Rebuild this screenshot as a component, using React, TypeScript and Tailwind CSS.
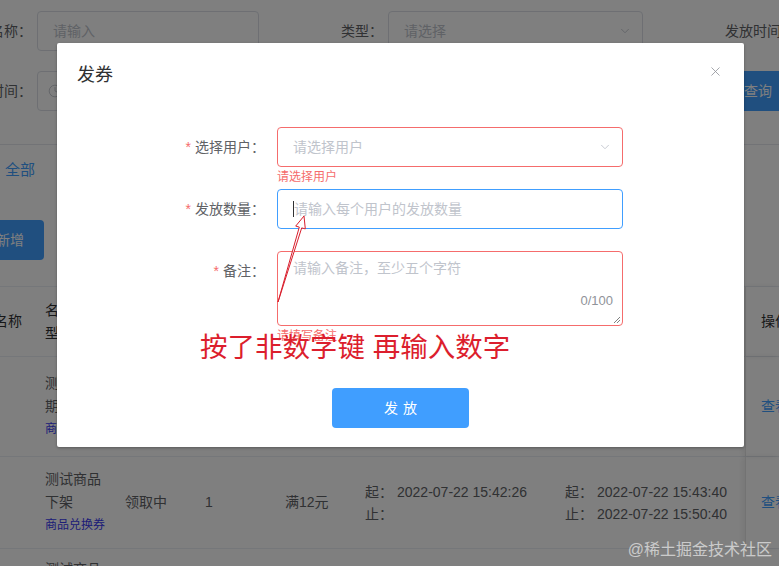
import { ChevronDown, Clock, X } from "lucide-react";

type Cell = { w: string; content: React.ReactNode };

function TableRow({ cells, height }: { cells: Cell[]; height: string }) {
  return (
    <div className={`flex shrink-0 border-b border-[#ebeef5] ${height}`}>
      {cells.map((cell, i) => (
        <div key={i} className={`flex items-center shrink-0 ${cell.w}`}>
          {cell.content}
        </div>
      ))}
    </div>
  );
}

function TypeTag({ children }: { children: React.ReactNode }) {
  return <div className="text-[12px] leading-[23px] text-[#3a3af0]">{children}</div>;
}

function BackgroundPage() {
  const opCol = "w-[34px] pl-[15px] border-l border-[#e6e6e6] shadow-[-2px_0_6px_rgba(0,0,0,0.08)] whitespace-nowrap";

  return (
    <div className="text-[14px] text-[#606266]">
      {/* search row 1 */}
      <div className="flex items-center h-10 mt-[11px] -ml-[58px] whitespace-nowrap">
        <span className="w-[90px] shrink-0 text-right">商品名称：</span>
        <div className="ml-[5px] w-[222px] h-10 shrink-0 flex items-center px-[15px] border border-[#dcdfe6] rounded-[4px] text-[#c0c4cc]">
          请输入
        </div>
        <span className="w-[129px] shrink-0 pr-[5px] text-right">类型：</span>
        <div className="w-[255px] h-10 shrink-0 flex items-center justify-between pl-[15px] pr-[10px] border border-[#dcdfe6] rounded-[4px] text-[#c0c4cc]">
          请选择
          <ChevronDown size={14} strokeWidth={1.5} color="#c0c4cc" />
        </div>
        <span className="ml-[82px] shrink-0">发放时间：</span>
      </div>

      {/* search row 2 */}
      <div className="flex items-center h-10 mt-[20px] -ml-[58px] whitespace-nowrap">
        <span className="w-[90px] shrink-0 text-right">发放时间：</span>
        <div className="ml-[5px] w-[400px] h-10 shrink-0 flex items-center gap-2 pl-[10px] border border-[#dcdfe6] rounded-[4px] text-[#c0c4cc]">
          <Clock size={14} strokeWidth={1.5} color="#c0c4cc" />
          开始日期
        </div>
        <button className="ml-[286px] w-[70px] h-10 shrink-0 rounded-[4px] bg-[#409eff] text-white">
          查询
        </button>
      </div>

      {/* tabs */}
      <div className="mt-[33px] border-t border-[#e4e7ed] h-[52px] flex items-center pl-[5px] text-[15px] text-[#409eff]">
        全部
      </div>

      <button className="mt-[24px] -ml-[24px] w-[68px] h-10 rounded-[4px] bg-[#409eff] text-white">
        新增
      </button>

      {/* table */}
      <div className="mt-[26px] border-t border-[#ebeef5] flex flex-col">
        <TableRow
          height="h-[70px]"
          cells={[
            { w: "w-[45px]", content: <span className="-ml-[6px] text-[#303133]">名称</span> },
            { w: "w-[80px]", content: <span className="w-[62px] leading-[23px] text-[#303133]">名称及类型</span> },
            { w: "w-[80px]", content: <span className="text-[#303133]">状态</span> },
            { w: "w-[80px]", content: <span className="text-[#303133]">数量</span> },
            { w: "w-[80px]", content: <span className="text-[#303133]">门槛</span> },
            { w: "w-[200px]", content: <span className="text-[#303133]">发放时间</span> },
            { w: "w-[180px]", content: <span className="text-[#303133]">有效期</span> },
            { w: opCol, content: <span className="text-[#303133]">操作</span> },
          ]}
        />
        <TableRow
          height="h-[100px]"
          cells={[
            { w: "w-[45px]", content: null },
            {
              w: "w-[80px]",
              content: (
                <div className="w-[62px] leading-[23px]">
                  测试商品期限
                  <TypeTag>商品兑换券</TypeTag>
                </div>
              ),
            },
            { w: "w-[80px]", content: "已结束" },
            { w: "w-[80px]", content: "1" },
            { w: "w-[80px]", content: "满10元" },
            { w: "w-[200px]", content: null },
            { w: "w-[180px]", content: null },
            { w: opCol, content: <span className="text-[#409eff]">查看</span> },
          ]}
        />
        <TableRow
          height="h-[92px]"
          cells={[
            { w: "w-[45px]", content: null },
            {
              w: "w-[80px]",
              content: (
                <div className="w-[62px] leading-[23px]">
                  测试商品下架
                  <TypeTag>商品兑换券</TypeTag>
                </div>
              ),
            },
            { w: "w-[80px]", content: "领取中" },
            { w: "w-[80px]", content: "1" },
            { w: "w-[80px]", content: "满12元" },
            {
              w: "w-[200px]",
              content: (
                <div className="leading-[22px] whitespace-nowrap">
                  <div>
                    起：<span className="ml-[4px]">2022-07-22 15:42:26</span>
                  </div>
                  <div>止：</div>
                </div>
              ),
            },
            {
              w: "w-[180px]",
              content: (
                <div className="leading-[22px] whitespace-nowrap">
                  <div>
                    起：<span className="ml-[4px]">2022-07-22 15:43:40</span>
                  </div>
                  <div>
                    止：<span className="ml-[4px]">2022-07-22 15:50:40</span>
                  </div>
                </div>
              ),
            },
            { w: opCol, content: <span className="text-[#409eff]">查看</span> },
          ]}
        />
        <div className="flex pt-[9px]">
          <div className="w-[45px] shrink-0" />
          <div className="w-[62px] leading-[23px]">测试商品</div>
        </div>
      </div>
    </div>
  );
}

function FormLabel({ children }: { children: React.ReactNode }) {
  return (
    <div className="w-[120px] shrink-0 pr-[12px] text-right leading-10 text-[#606266] whitespace-nowrap">
      <span className="mr-[4px] text-[#f56c6c]">*</span>
      {children}
    </div>
  );
}

function CouponDialog() {
  return (
    <div className="absolute left-[57px] top-[43px] w-[687px] h-[404px] bg-white rounded-[2px] shadow-[0_1px_3px_rgba(0,0,0,0.3)]">
      <div className="relative px-5 pt-5 pb-[10px]">
        <div className="text-[18px] leading-6 text-[#303133]">发券</div>
        <button className="absolute top-[20px] right-[21px] w-4 h-4 flex items-center justify-center">
          <X size={15} strokeWidth={1.3} color="#909399" />
        </button>
      </div>

      <div className="px-5 pt-[30px] text-[14px]">
        <div className="flex flex-col pl-[80px]">
          <div className="relative flex mb-[22px]">
            <FormLabel>选择用户：</FormLabel>
            <div className="w-[346px] h-10 flex items-center justify-between pl-[15px] pr-[10px] border border-[#f56c6c] rounded-[4px] text-[#c0c4cc]">
              请选择用户
              <ChevronDown size={14} strokeWidth={1.5} color="#c0c4cc" />
            </div>
            <div className="absolute left-[120px] top-full pt-[4px] text-[12px] leading-[12px] text-[#f56c6c]">
              请选择用户
            </div>
          </div>

          <div className="relative flex mb-[22px]">
            <FormLabel>发放数量：</FormLabel>
            <div className="w-[346px] h-10 flex items-center pl-[15px] border border-[#409eff] rounded-[4px] text-[#c0c4cc]">
              <span className="w-px h-4 bg-[#303133]" />
              请输入每个用户的发放数量
            </div>
          </div>

          <div className="relative flex mb-[22px]">
            <FormLabel>备注：</FormLabel>
            <div className="relative w-[346px] h-[75px] px-[15px] pt-[6px] border border-[#f56c6c] rounded-[4px] text-[#c0c4cc] leading-[21px]">
              请输入备注，至少五个字符
              <span className="absolute right-[9px] bottom-[16px] text-[13px] leading-4 text-[#909399]">
                0/100
              </span>
              <svg className="absolute right-[1px] bottom-[1px]" width="8" height="8" viewBox="0 0 8 8">
                <path d="M7 1 L1 7 M7 4 L4 7" stroke="#808080" strokeWidth="1" />
              </svg>
            </div>
            <div className="absolute left-[120px] top-full pt-[4px] text-[12px] leading-[12px] text-[#f56c6c]">
              请填写备注
            </div>
          </div>
        </div>

        <div className="flex justify-center mt-[40px]">
          <button className="w-[137px] h-10 rounded-[4px] bg-[#409eff] text-white tracking-[5px] pl-[5px]">
            发放
          </button>
        </div>
      </div>

      {/* hand-drawn annotation */}
      <svg className="absolute left-0 top-0 pointer-events-none" width="687" height="404">
        <polygon
          points="221,259 242.3,184.1 238.7,183.1 247,173 248.3,185.9 244.7,184.9"
          fill="white"
          stroke="#d81e2c"
          strokeWidth="1"
          strokeLinejoin="round"
        />
      </svg>
      <div className="absolute left-[143px] top-[288px] text-[27.5px] leading-[33px] text-[#dc1e2d] whitespace-nowrap">
        按了非数字键 再输入数字
      </div>
    </div>
  );
}

export default function App() {
  return (
    <div className="relative w-[779px] h-[566px] overflow-hidden bg-white font-['Liberation_Sans','Noto_Sans_CJK_SC',sans-serif]">
      <BackgroundPage />
      <div className="absolute inset-0 bg-black/50" />
      <CouponDialog />
      <div className="absolute right-[7px] bottom-[6px] text-[16px] leading-5 text-white/60 whitespace-nowrap">
        @稀土掘金技术社区
      </div>
    </div>
  );
}
